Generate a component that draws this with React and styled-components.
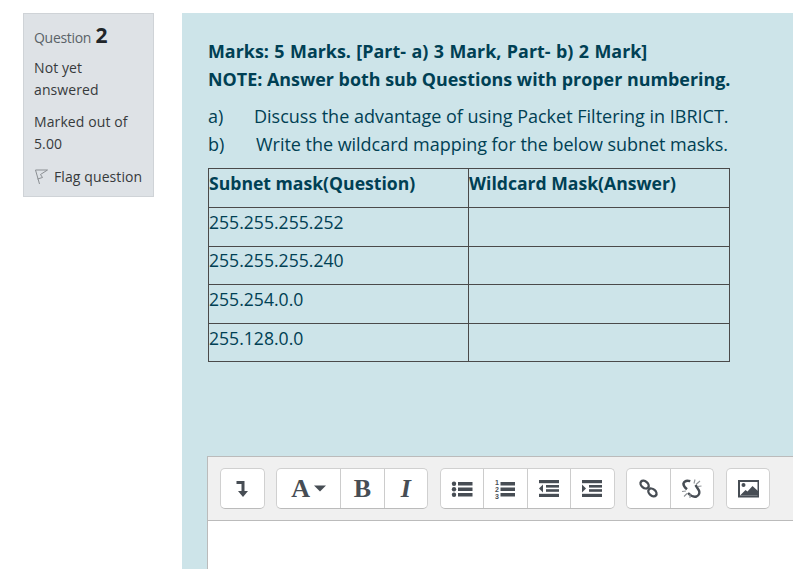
import React from "react";
import styled, { createGlobalStyle } from "styled-components";

const Global = createGlobalStyle`
  html, body { margin: 0; padding: 0; background: #fff; height: 569px; overflow: hidden; }
  #root { height: 569px; overflow: hidden; }
`;

const Page = styled.div`
  display: flex;
  align-items: flex-start;
  gap: 28px;
  padding: 13px 0 0 23px;
  height: 556px;
  font-family: "Open Sans", "Noto Sans", sans-serif;
`;

const Info = styled.aside`
  flex: none;
  box-sizing: border-box;
  width: 131px;
  height: 184px;
  padding: 7px 10px 0;
  background: #dee2e6;
  border: 1px solid #cfd3d7;
  color: #373a3c;
  font-size: 14px;
  line-height: 22px;
`;

const QuestionNo = styled.h3`
  margin: 0 0 12px;
  font-size: 14px;
  font-weight: 400;
  line-height: 28px;
  letter-spacing: -0.3px;
  color: #5a6268;
  span { font-size: 21px; font-weight: 700; color: #212529; margin-left: 1px; letter-spacing: 0; }
`;

const Status = styled.div`
  margin: -7px 0 17px;
  letter-spacing: 0.1px;
`;

const Flag = styled.div`
  display: flex;
  align-items: center;
  gap: 5px;
  margin: -6px -6px 0 0;
  letter-spacing: 0.1px;
  white-space: nowrap;
`;

const Content = styled.main`
  flex: 1;
  box-sizing: border-box;
  height: 556px;
  padding: 24px 0 0 25px;
  background: #cde4e9;
  color: #004054;
  overflow: hidden;
`;

const Notice = styled.p`
  margin: 0 0 0 1px;
  font-size: 17.9px;
  font-weight: 700;
  line-height: 28px;
  word-spacing: ${(p) => p.$ws || 0}px;
  color: #004054;
  white-space: nowrap;
`;

const Parts = styled.div`
  margin: 9px 0 10px 1px;
  font-size: 18px;
  line-height: 28px;
`;

const Part = styled.div`
  display: flex;
  white-space: nowrap;
  letter-spacing: ${(p) => p.$ls || 0}px;
`;

const PartLabel = styled.span`
  flex: none;
  width: ${(p) => p.$w}px;
`;

const Table = styled.table`
  box-sizing: border-box;
  width: 521px;
  margin-left: 1px;
  border-collapse: collapse;
  table-layout: fixed;
  font-size: 17.6px;
`;

const Cell = styled.td`
  box-sizing: border-box;
  height: ${(p) => p.$h || 38.6}px;
  padding: 0 0 10px 0;
  border: 1px solid #4a4a4a;
  font-weight: ${(p) => (p.$head ? 700 : 400)};
  line-height: 24px;
  white-space: nowrap;
  vertical-align: middle;
`;

const Editor = styled.div`
  margin: 94px 0 0 0;
  height: 120px;
  background: #fff;
  border: 1px solid #bbb;
  border-right: 0;
`;

const Toolbar = styled.div`
  box-sizing: border-box;
  display: flex;
  align-items: flex-start;
  gap: 11.6px;
  height: 64px;
  padding: 11px 0 0 12px;
  background: #f0f0f0;
  border-bottom: 1px solid #bbb;
`;

const Group = styled.div`
  display: flex;
  flex: none;
  height: 41px;
  box-sizing: border-box;
  background: #fff;
  border: 1px solid #d0d0d0;
  border-bottom-color: #bbb;
  border-radius: 5px;
`;

const Btn = styled.div`
  display: flex;
  align-items: center;
  justify-content: center;
  gap: 4px;
  flex: none;
  box-sizing: border-box;
  width: ${(p) => p.$w || 43.5}px;
  height: 39px;
  color: #474d54;
  & + & { border-left: 1px solid #ccc; }
  &:first-child { width: ${(p) => (p.$w || 43.5) - 1}px; }
`;

const Glyph = styled.span`
  font-family: "Liberation Serif", serif;
  font-size: 26px;
  font-weight: 700;
  font-style: ${(p) => (p.$italic ? "italic" : "normal")};
  line-height: 1;
  color: #474d54;
`;

const Ic = ({ children, w = 22, h = 22 }) => (
  <svg width={w} height={h} viewBox={`0 0 ${w} ${h}`} fill="#474d54">{children}</svg>
);

const FlagIcon = () => (
  <svg width="15" height="16" viewBox="0 0 15 16" fill="none" stroke="#8b8f93" strokeWidth="1">
    <path d="M1.5 1 L5.5 15 M1.5 1 H13.5 L6.5 5.5 L8.5 8.5 L3.5 10" />
  </svg>
);

const BulletList = () => (
  <Ic>
    <circle cx="3" cy="5.7" r="2.2" /><circle cx="3" cy="11.2" r="2.2" /><circle cx="3" cy="16.8" r="2.2" />
    <rect x="7" y="4" width="14.5" height="3.5" /><rect x="7" y="9.5" width="14.5" height="3.5" /><rect x="7" y="15" width="14.5" height="3.5" />
  </Ic>
);

const NumList = () => (
  <Ic>
    <g fontFamily="Liberation Sans" fontWeight="700" fontSize="7">
      <text x="1" y="7">1</text><text x="1" y="14">2</text><text x="1" y="21">3</text>
    </g>
    <rect x="6.5" y="4" width="14.5" height="3.5" /><rect x="6.5" y="9.5" width="14.5" height="3.5" /><rect x="6.5" y="15" width="14.5" height="3.5" />
  </Ic>
);

const Indent = ({ out }) => (
  <Ic>
    <rect x="1" y="2" width="20" height="3.2" />
    <rect x="8" y="7" width="13" height="2.6" />
    <rect x="8" y="11.2" width="13" height="2.6" />
    <rect x="1" y="15.8" width="20" height="3.2" />
    {out ? <path d="M5 6.5 V14.5 L1 10.5 Z" /> : <path d="M1 6.5 V14.5 L5 10.5 Z" />}
  </Ic>
);

const Link = () => (
  <Ic>
    <g fill="none" stroke="#474d54" strokeWidth="2.4">
      <ellipse cx="6.6" cy="6.6" rx="4.6" ry="3.2" transform="rotate(40 6.6 6.6)" />
      <ellipse cx="14.4" cy="14.4" rx="4.6" ry="3.2" transform="rotate(40 14.4 14.4)" />
    </g>
  </Ic>
);

const Unlink = () => (
  <Ic>
    <g fill="none" stroke="#474d54" strokeWidth="2.4">
      <path d="M9.3 3.2 Q4 1.5 2.4 5.6 Q2.5 8.5 6 11.3" />
      <path d="M14.5 7 L18 12.5 Q19.5 16.5 15.5 18.5 Q11 19.5 7 15" />
    </g>
    <g stroke="#8f9397" strokeWidth="1.1" fill="none">
      <path d="M13 5.5 L14 1.5 M15 6.5 L19 3 M16.5 8.5 L20.5 8 M1 13.5 L5 13 M3 18.5 L6 15.5 M9 16 L9 20" />
    </g>
  </Ic>
);

const Image = () => (
  <Ic>
    <rect x="2" y="3" width="19.5" height="15.5" fill="none" stroke="#474d54" strokeWidth="2" />
    <circle cx="6.5" cy="7" r="2" />
    <path d="M3 17.5 L8.5 12 L10.5 13.5 L15.5 8 L21 13 V17.5 Z" />
  </Ic>
);

const Enter = () => (
  <Ic w={13} h={18}>
    <path d="M0.5 1 H8.5 V11 H12 L7 17 L2 11 H5.5 V4 H0.5 Z" />
  </Ic>
);

const Caret = () => (
  <svg width="12" height="7" viewBox="0 0 12 7" fill="#474d54"><path d="M0 0.5 H12 L6 6.5 Z" /></svg>
);

const rows = ["255.255.255.252", "255.255.255.240", "255.254.0.0", "255.128.0.0"];

export default function App() {
  return (
    <>
      <Global />
      <Page>
        <Info>
          <QuestionNo>Question <span>2</span></QuestionNo>
          <Status>Not yet answered</Status>
          <Status>Marked out of 5.00</Status>
          <Flag><FlagIcon />Flag question</Flag>
        </Info>
        <Content>
          <Notice $ws={0.8}>Marks: 5 Marks. [Part- a) 3 Mark, Part- b) 2 Mark]</Notice>
          <Notice>NOTE: Answer both sub Questions with proper numbering.</Notice>
          <Parts>
            <Part><PartLabel $w={46}>a)</PartLabel>Discuss the advantage of using Packet Filtering in IBRICT.</Part>
            <Part $ls={-0.03}><PartLabel $w={48}>b)</PartLabel>Write the wildcard mapping for the below subnet masks.</Part>
          </Parts>
          <Table>
            <colgroup><col width="260" /><col width="261" /></colgroup>
            <tbody>
              <tr>
                <Cell $head $h={39}>Subnet mask(Question)</Cell>
                <Cell $head $h={39}>Wildcard Mask(Answer)</Cell>
              </tr>
              {rows.map((r) => (
                <tr key={r}><Cell>{r}</Cell><Cell /></tr>
              ))}
            </tbody>
          </Table>
          <Editor>
            <Toolbar>
              <Group><Btn><Enter /></Btn></Group>
              <Group>
                <Btn $w={64}><Glyph>A</Glyph><Caret /></Btn>
                <Btn><Glyph>B</Glyph></Btn>
                <Btn><Glyph $italic>I</Glyph></Btn>
              </Group>
              <Group>
                <Btn><BulletList /></Btn>
                <Btn><NumList /></Btn>
                <Btn><Indent out /></Btn>
                <Btn><Indent /></Btn>
              </Group>
              <Group>
                <Btn><Link /></Btn>
                <Btn><Unlink /></Btn>
              </Group>
              <Group><Btn><Image /></Btn></Group>
            </Toolbar>
          </Editor>
        </Content>
      </Page>
    </>
  );
}
